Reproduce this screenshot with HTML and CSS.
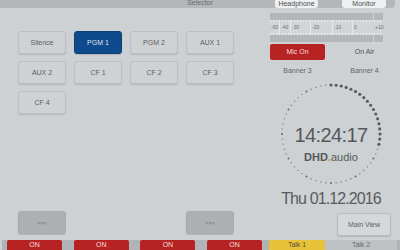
FILE: index.html
```html
<!DOCTYPE html>
<html lang="en">
<head>
  <meta charset="UTF-8" />
  <title>Selector</title>
  <link rel="stylesheet" href="styles.css">
</head>
<body>
<div class="screen">

  <div class="topbar">
    <span class="sel">Selector</span>
    <span class="tab tab-hp">Headphone</span>
    <span class="tab tab-mon">Monitor</span>
  </div>

  <div class="main">
    <div class="left">
      <div class="grid">
        <button class="btn">Silence</button>
        <button class="btn active">PGM 1</button>
        <button class="btn">PGM 2</button>
        <button class="btn">AUX 1</button>
        <button class="btn">AUX 2</button>
        <button class="btn">CF 1</button>
        <button class="btn">CF 2</button>
        <button class="btn">CF 3</button>
        <button class="btn">CF 4</button>
      </div>
      <div class="grid">
        <button class="btn nav">&lt;&lt;&lt;</button>
        <button class="btn nav last">&gt;&gt;&gt;</button>
      </div>
    </div>

    <div class="right">
      <div class="meter">
        <div class="meter-part meter-main">
          <div class="band"></div>
          <div class="scale">
            <span style="width:9px">-60</span>
            <span style="width:11px">-40</span>
            <span style="width:20px">-30</span>
            <span style="width:22px">-20</span>
            <span style="width:20px">-10</span>
            <span style="flex:1">0</span>
          </div>
          <div class="band"></div>
        </div>
        <div class="meter-part meter-peak">
          <div class="band"></div>
          <div class="scale"><span style="flex:1">+10</span></div>
          <div class="band"></div>
        </div>
      </div>

      <div class="pair">
        <div class="mic">Mic On</div>
        <div class="label">On Air</div>
      </div>

      <div class="pair banners">
        <div class="label">Banner 3</div>
        <div class="label">Banner 4</div>
      </div>

      <div class="clock">
        <svg id="ring" width="106" height="106" viewBox="0 0 106 106"></svg>
        <div class="face">
          <div class="time">14:24:17</div>
          <div class="brand"><b>DHD</b><span class="dot">.</span>audio</div>
        </div>
      </div>

      <div class="date">Thu 01.12.2016</div>

      <div class="pair">
        <div></div>
        <button class="btn mainview">Main View</button>
      </div>
    </div>
  </div>

  <div class="bottombar">
    <div class="cell on">ON</div>
    <div class="cell on">ON</div>
    <div class="cell on">ON</div>
    <div class="cell on fourth">ON</div>
    <div class="cell talk1">Talk 1</div>
    <div class="cell talk2">Talk 2</div>
  </div>

</div>

<script>
  // seconds ring, 17 seconds elapsed
  const ring = document.getElementById('ring');
  const sec = 17;
  for (let i = 0; i < 60; i++) {
    const a = i * 6 * Math.PI / 180;
    const x = 53 + 49 * Math.sin(a);
    const y = 53 - 49 * Math.cos(a);
    let r = 0.65;
    let fill = '#6b6f73';
    if (i <= sec) { r = 1.55; fill = '#55595d'; }
    else if (i % 5 === 0) { r = 1.05; }
    const c = document.createElementNS('http://www.w3.org/2000/svg', 'circle');
    c.setAttribute('cx', x.toFixed(2));
    c.setAttribute('cy', y.toFixed(2));
    c.setAttribute('r', r);
    c.setAttribute('fill', fill);
    ring.appendChild(c);
  }
</script>
</body>
</html>
```

FILE: styles.css
```css
* {
  box-sizing: border-box;
}
body {
  margin: 0;
  background: #cdd1d4;
  font-family: "Liberation Sans", Arial, sans-serif;
  color: #5a5e62;
}
.screen {
  width: 400px;
  height: 250px;
  display: flex;
  flex-direction: column;
  overflow: hidden;
}

/* top bar */
.topbar {
  width: 395px;
  height: 8px;
  flex: none;
  display: flex;
  align-items: flex-start;
  background: #b3b7ba;
  border-bottom-right-radius: 4px;
  font-size: 7px;
}
.sel {
  width: 275px;
  padding-left: 125px;
  text-align: center;
  line-height: 5px;
  height: 8px;
  overflow: hidden;
  color: #666a6e;
}
.tab {
  height: 8px;
  line-height: 8px;
  text-align: center;
  background: #eef0f1;
  color: #4a4e52;
  border-radius: 0 0 3px 3px;
}
.tab-hp {
  width: 43px;
}
.tab-mon {
  width: 44px;
  margin-left: 24px;
}

/* main */
.main {
  height: 232px;
  display: flex;
}
.left {
  width: 270px;
  padding: 23px 0 6px 18px;
  display: flex;
  flex-direction: column;
  justify-content: space-between;
}
.grid {
  display: grid;
  grid-template-columns: repeat(4, 48px);
  column-gap: 8px;
  row-gap: 7px;
}
.btn {
  height: 23px;
  padding: 0;
  font-family: inherit;
  font-size: 7px;
  color: #5a5e62;
  background: #cfd2d5;
  border: 1px solid #bcc0c3;
  border-radius: 3px;
  box-shadow: 0 1px 1px rgba(0, 0, 0, 0.12);
}
.btn.active {
  background: #0f4a8c;
  border-color: #0c3f78;
  color: #dfe6ef;
}
.btn.nav {
  background: #adb1b4;
  border-color: #a8acaf;
  color: #5c6064;
  font-size: 5.5px;
}
.btn.last {
  grid-column: 4;
}

.right {
  width: 122px;
  display: flex;
  flex-direction: column;
}

/* meter */
.meter {
  margin-top: 5px;
  height: 29px;
  width: 113px;
  display: flex;
  gap: 1px;
}
.meter-part {
  display: flex;
  flex-direction: column;
}
.meter-main {
  width: 103px;
}
.meter-peak {
  width: 9px;
}
.band {
  height: 7px;
  background: #b3b7ba;
}
.scale {
  height: 15px;
  display: flex;
  background-color: #d2d5d8;
  background-image:
    repeating-linear-gradient(90deg, #e9ebec 0 1px, transparent 1px 3px),
    repeating-linear-gradient(90deg, #e9ebec 0 1px, transparent 1px 3px);
  background-size: 100% 2px, 100% 2px;
  background-position: 0 0, 0 100%;
  background-repeat: no-repeat;
}
.scale span {
  font-size: 5px;
  line-height: 15px;
  padding-left: 1px;
  color: #6a6e72;
  border-left: 1px solid #e6e8e9;
  white-space: nowrap;
}
.scale span:first-child {
  border-left: none;
}

/* mic / banners */
.pair {
  display: grid;
  grid-template-columns: 55px 55px;
  column-gap: 12px;
}
.pair:nth-child(2) {
  margin-top: 2px;
}
.mic {
  height: 16px;
  line-height: 16px;
  text-align: center;
  font-size: 7px;
  color: #f3dede;
  background: #b72323;
  border-radius: 2px;
}
.label {
  text-align: center;
  font-size: 7px;
  line-height: 16px;
  color: #4e5256;
}
.banners {
  margin-top: 6px;
}
.banners .label {
  line-height: 10px;
  color: #62666a;
}

/* clock */
.clock {
  margin-top: 5px;
  display: grid;
  justify-items: center;
}
.clock svg,
.face {
  grid-area: 1 / 1;
}
.face {
  padding-top: 44px;
  text-align: center;
  color: #54585c;
}
.time {
  font-size: 20px;
  line-height: 20px;
  letter-spacing: -0.6px;
}
.brand {
  margin-top: 7px;
  font-size: 11px;
  line-height: 10px;
}
.brand .dot {
  color: #e8820c;
  font-weight: bold;
}
.date {
  margin-top: 3px;
  height: 18px;
  line-height: 18px;
  text-align: center;
  font-size: 16px;
  letter-spacing: -0.9px;
  color: #575b5f;
}
.date + .pair {
  margin-top: 5px;
}
.btn.mainview {
  height: 23px;
  width: 54px;
  background: #d5d8da;
  border-color: #b8bcbf;
}

/* bottom bar */
.bottombar {
  height: 10px;
  margin-left: 2px;
  padding: 0 3px 0 5px;
  display: flex;
  background: #b0b4b7;
}
.cell {
  width: 55px;
  margin-right: 11.7px;
  font-size: 7px;
  line-height: 10px;
  text-align: center;
  border-radius: 2px 2px 0 0;
}
.on {
  background: #b72323;
  color: #f3dede;
}
.on.fourth {
  margin-right: 7px;
}
.talk1 {
  width: 56px;
  margin-right: 0;
  background: #e8c33a;
  color: #5a5030;
}
.talk2 {
  flex: 1;
  margin-right: 0;
  background: #bfc2c4;
  color: #65696d;
}
```
